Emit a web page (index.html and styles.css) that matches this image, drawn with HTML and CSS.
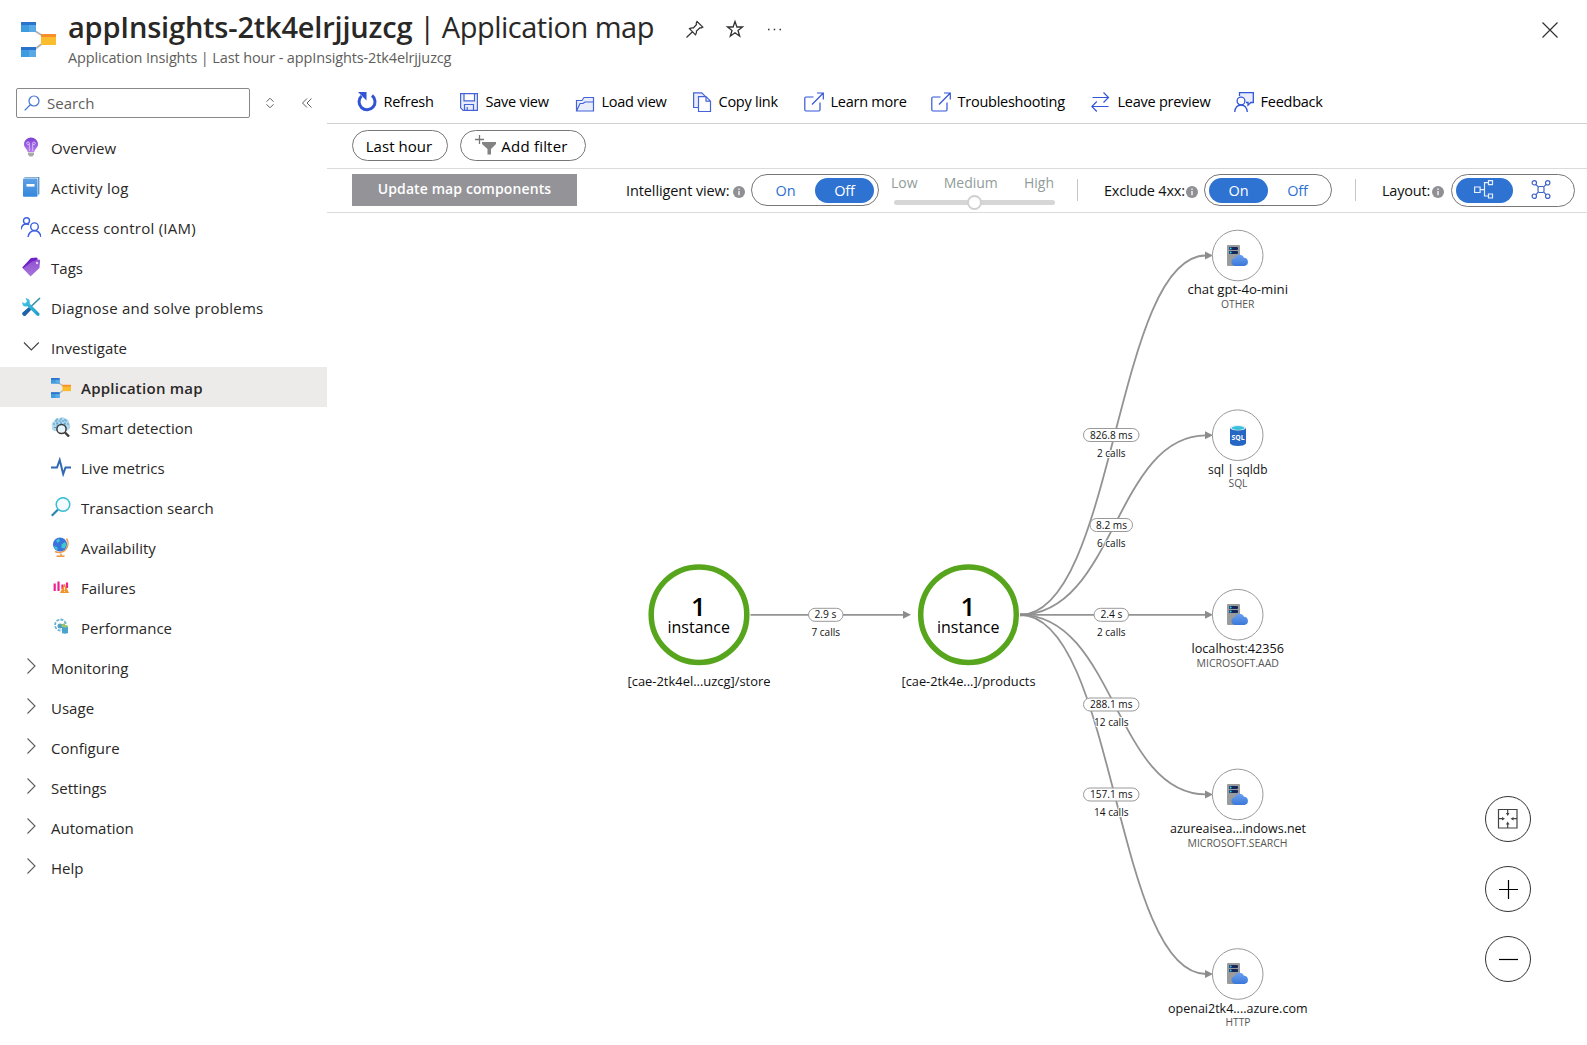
FILE: index.html
```html
<!DOCTYPE html>
<html lang="en">
<head>
<meta charset="utf-8">
<title>Application map</title>
<link rel="stylesheet" href="styles.css">
</head>
<body>
<svg class="defs" aria-hidden="true">
  <defs>
    <linearGradient id="gBulb" x1="0" y1="0" x2="0" y2="1"><stop offset="0" stop-color="#7a3fd0"/><stop offset="1" stop-color="#b77df0"/></linearGradient>
    <linearGradient id="gBook" x1="0" y1="0" x2="0" y2="1"><stop offset="0" stop-color="#5ea0e6"/><stop offset="1" stop-color="#3388dc"/></linearGradient>
    <linearGradient id="gTag" x1="0" y1="0" x2="0" y2="1"><stop offset="0" stop-color="#8f4fd0"/><stop offset="1" stop-color="#a875dc"/></linearGradient>
    <linearGradient id="gCloud" x1="0" y1="0" x2="0" y2="1"><stop offset="0" stop-color="#6ca0f0"/><stop offset="1" stop-color="#3a78d8"/></linearGradient>
    <linearGradient id="gTool" x1="0" y1="0" x2="1" y2="1"><stop offset="0" stop-color="#45c8ec"/><stop offset="1" stop-color="#1f9cc8"/></linearGradient>
    <symbol id="appmap" viewBox="0 0 35 35">
      <path d="M14 9 L22 14 M14 27 L22 21" stroke="#b3b3b3" stroke-width="2" fill="none"/>
      <path d="M0 0h15v10H0z" fill="#3d9be0"/><path d="M8 2h7v8H8z" fill="#5aa9e6"/><path d="M0 0h15v3H0z" fill="#2a72cc"/>
      <path d="M0 25h15v10H0z" fill="#3d9be0"/><path d="M8 27h7v8H8z" fill="#5aa9e6"/><path d="M0 25h15v3H0z" fill="#2a72cc"/>
      <path d="M20 12h15v11H20z" fill="#fbbd2e"/><path d="M20 12h15v3H20z" fill="#f98f2b"/>
    </symbol>
    <symbol id="info" viewBox="0 0 12 12"><circle cx="6" cy="6" r="6" fill="#8f8f94"/><path d="M6 5v4.2M6 2.6v1.3" stroke="#fff" stroke-width="1.3"/></symbol>
    <symbol id="chev" viewBox="0 0 20 20"><path d="M6.500 2.500 L14 10 L6.500 17.500" fill="none" stroke="#605e5c" stroke-width="1.1"/></symbol>
    <symbol id="ext" viewBox="0 0 20 20"><path d="M9.500 5H2Q.8 5 .8 6.200V17.800Q.8 19 2 19H14.800Q16 19 16 17.800V10.500M13 1H19.300V7.500M19.300 1 8 12.500" fill="none" stroke="#3355d8" stroke-width="1.2"/></symbol>
    <symbol id="server" viewBox="0 0 22 22">
      <path d="M1 0h11q1 0 1 1v20H1q-1 0-1-1V1q0-1 1-1z" fill="#9b9b9b"/>
      <rect x="2" y="2" width="9" height="3" rx="1" fill="#14285c"/><rect x="2" y="6" width="9" height="3" rx="1" fill="#14285c"/>
      <circle cx="3.600" cy="3.500" r="1" fill="#35d0f0"/><circle cx="3.600" cy="7.500" r="1" fill="#35d0f0"/>
      <path d="M8 21a3.900 3.900 0 0 1-.4-7.700A5 5 0 0 1 17 12.700a4.200 4.200 0 0 1 .6 8.300z" fill="url(#gCloud)"/>
    </symbol>
  </defs>
</svg>

<header class="head">
  <svg class="head-logo"><use href="#appmap"/></svg>
  <div class="head-text">
    <h1 class="title"><b class="title-name">appInsights-2tk4elrjjuzcg</b><span class="title-page"> | Application map</span></h1>
    <p class="subtitle">Application Insights | Last hour - appInsights-2tk4elrjjuzcg</p>
  </div>
  <div class="head-actions">
    <svg width="20" height="20" viewBox="0 0 20 20"><path d="M12 2.500 L17.800 8 L16 9 L15 8.700 L11.500 12 Q11.700 14 10.500 15.800 L4.500 9.600 Q6.500 8.600 8.300 9 L11.500 5.500 L11.200 4.300 Z M7.500 12.800 L1.500 18.500" fill="none" stroke="#323130" stroke-width="1.200"/></svg>
    <svg width="20" height="20" viewBox="0 0 20 20"><path d="M10 2.500 L11.900 8 H17.500 L13 11.500 L14.700 17.200 L10 13.800 L5.300 17.200 L7 11.500 L2.500 8 H8.100 Z" fill="none" stroke="#323130" stroke-width="1.300"/></svg>
    <svg width="20" height="20" viewBox="0 0 20 20"><path d="M3 10.500h1.500M8.700 10.500h1.500M14.500 10.500h1.500" stroke="#323130" stroke-width="1.300"/></svg>
  </div>
  <svg class="close" width="16" height="16" viewBox="0 0 16 16"><path d="M.5.500 15.500 15.500M15.500.500.500 15.500" stroke="#323130" stroke-width="1.200"/></svg>
</header>

<div class="body">
  <aside class="side">
    <div class="side-top">
      <div class="search">
        <svg width="16" height="16" viewBox="0 0 16 16"><circle cx="10" cy="6" r="5" fill="none" stroke="#3f73cf" stroke-width="1.200"/><path d="M6.500 9.500.700 15.300" stroke="#3f73cf" stroke-width="1.200"/></svg>
        <span>Search</span>
      </div>
      <svg class="updown" width="10" height="12" viewBox="0 0 10 12"><path d="M1.500 4.700 5 1.200l3.500 3.500M1.500 7.300 5 10.800l3.500-3.500" fill="none" stroke="#605e5c" stroke-width="1"/></svg>
      <svg class="collapse" width="12" height="12" viewBox="0 0 12 12"><path d="M6 1.500 1.500 6 6 10.500M10.500 1.500 6 6l4.500 4.500" fill="none" stroke="#605e5c" stroke-width="1"/></svg>
    </div>
    <nav class="nav">
      <a class="row"><svg viewBox="0 0 20 20"><path d="M10 .5a7 6.800 0 0 1 7 6.800c0 3.200-3.200 4.700-3.800 7.700H6.800C6.200 12 3 10.500 3 7.300A7 6.800 0 0 1 10 .5z" fill="url(#gBulb)"/><path d="M8.300 14V7.500M11.700 14V7.500M8.300 7.500H6.800a1.300 1.300 0 1 1 1.500-1.500zM11.700 7.500h1.500a1.300 1.300 0 1 0-1.500-1.500z" stroke="#e4d0fb" stroke-width=".8" fill="none"/><path d="M7 15.500h6v2l-1.500 2h-3L7 17.500z" fill="#a9a9a9"/></svg><span>Overview</span></a>
      <a class="row wide"><svg viewBox="0 0 20 20"><path d="M3.500 0h14v19h-14L2 18V1.500z" fill="#e6f1fb"/><path d="M3.500 0h14.300v17.500" fill="none" stroke="#2c6fb0" stroke-width="1"/><rect x="2" y="1.500" width="14.500" height="18.200" rx="1" fill="url(#gBook)"/><rect x="5.500" y="7" width="8" height="2.600" fill="#fff"/></svg><span>Activity log</span></a>
      <a class="row wide"><svg viewBox="0 0 20 20"><g fill="none" stroke="#3b5fe0" stroke-width="1.400"><circle cx="5.500" cy="3.700" r="3"/><path d="M0 12.500C.5 9 2.800 7 5.500 7q1.500 0 2.500.7"/><circle cx="13.500" cy="9.700" r="3.800"/><path d="M7 20c.7-4 3.500-6.300 6.500-6.300S19.300 16 20 20"/></g></svg><span>Access control (IAM)</span></a>
      <a class="row"><svg viewBox="0 0 20 20"><path d="M10 1 15.500.5 17 2 9 10.500 5 14 1.200 10.500z" fill="#7020c4"/><path d="M11 4.500 18 2.500q1 0 1 1.200L18.500 11 9.500 19.500 2 11.500z" fill="url(#gTag)"/><circle cx="16" cy="6" r="1.500" fill="#fff" stroke="#9858d6"/></svg><span>Tags</span></a>
      <a class="row wide"><svg viewBox="0 0 20 20"><path d="M19 1 10 9.500" stroke="#3a8fae" stroke-width="1.700"/><path d="M8.500 9.500 11 12 4.500 18.700Q3 19.500 1.800 18.300T1.600 15.500z" fill="#1e62a8"/><path d="M4.500.8 7.800 2.200Q9.500 4 8.800 6.800L18.500 16.500Q19 18.500 17.200 19L15.800 18.600 6.400 9.200Q3.500 10 1.800 8.200L1 5 4 6.500 6 4.500z" fill="url(#gTool)"/></svg><span>Diagnose and solve problems</span></a>
      <a class="row"><svg viewBox="0 0 20 20"><path d="M3 5.500 10.300 13l7.500-7.500" fill="none" stroke="#484644" stroke-width="1.200"/></svg><span>Investigate</span></a>
      <a class="row sub active"><svg><use href="#appmap"/></svg><span>Application map</span></a>
      <a class="row sub"><svg viewBox="0 0 20 20"><path d="M3 4Q5 0 8 1.500 12-1 14.500 1.500 18 2 18 6 20.500 9 18 12.500L14 15 5 14Q0 14 1 9.500 0 5.500 3 4z" fill="#b3d9ee"/><path d="M2 7h16M3 10.500h14M4 4h12M6 1.500v13M10 1v14M14 2v12" stroke="#4e97c4" stroke-width="1" stroke-dasharray="2 1.500"/><circle cx="10.500" cy="12" r="4.600" fill="#e8f4fb" stroke="#3c3c3c" stroke-width="1.500"/><path d="M14 15.500l4 4" stroke="#3c3c3c" stroke-width="2.400"/></svg><span>Smart detection</span></a>
      <a class="row sub"><svg viewBox="0 0 20 20"><path d="M0 10.500h6L8.700 3l3.500 14 2.300-6.500H20" fill="none" stroke="#2f68b4" stroke-width="2"/></svg><span>Live metrics</span></a>
      <a class="row sub"><svg viewBox="0 0 20 20"><path d="M7 12.500.800 18.800" stroke="#2a86ae" stroke-width="2.200"/><circle cx="12" cy="7.500" r="6.800" fill="#f3fbfe" stroke="#38bcd8" stroke-width="1.500"/></svg><span>Transaction search</span></a>
      <a class="row sub"><svg viewBox="0 0 20 20"><path d="M15.500 1.500A9 9 0 0 1 4 14.500M10 16.500v2.500" fill="none" stroke="#f09a4a" stroke-width="1.500"/><circle cx="9" cy="7.500" r="7" fill="#3874dc"/><path d="M5 3.500 8 1.500 9 4 6.500 6zM10.500 7.500 14 5l1.500 3-2 3.500-3-.5zM3 9l3 1 1 3-2.500-.5z" fill="#3cc8ce"/><path d="M5.500 19.200h8" stroke="#f09a4a" stroke-width="1.600"/></svg><span>Availability</span></a>
      <a class="row sub"><svg viewBox="0 0 20 20"><path d="M3.700 6.500V14M7.500 4.500V14M11.500 7.500V12M16 5.500V11" stroke="#ec2090" stroke-width="2.200"/><path d="M13.500 6.500 18 16H9z" fill="#f8902c"/><path d="M13.500 10v3M13.500 14v1" stroke="#fff1d0" stroke-width="1"/></svg><span>Failures</span></a>
      <a class="row sub"><svg viewBox="0 0 20 20"><circle cx="9.500" cy="8" r="5.500" fill="none" stroke="#6ab4d4" stroke-width="1.800" stroke-dasharray="3 1.200"/><circle cx="9" cy="9" r="2.500" fill="#4f9fc6"/><path d="M9 8l5-2v4z" fill="#8cc06a"/><path d="M11 9.500h6v6.500q-3 1.500-6 0z" fill="#4aa3cc"/><ellipse cx="14" cy="9.300" rx="3" ry="1.100" fill="#a8c860"/></svg><span>Performance</span></a>
      <a class="row"><svg class="cv"><use href="#chev"/></svg><span>Monitoring</span></a>
      <a class="row"><svg class="cv"><use href="#chev"/></svg><span>Usage</span></a>
      <a class="row"><svg class="cv"><use href="#chev"/></svg><span>Configure</span></a>
      <a class="row"><svg class="cv"><use href="#chev"/></svg><span>Settings</span></a>
      <a class="row"><svg class="cv"><use href="#chev"/></svg><span>Automation</span></a>
      <a class="row"><svg class="cv"><use href="#chev"/></svg><span>Help</span></a>
    </nav>
  </aside>

  <main class="main">
    <div class="toolbar">
      <div class="cmd"><svg viewBox="0 0 20 20"><path d="M15 3.500A8 8 0 1 1 4.500 4" fill="none" stroke="#2f55d4" stroke-width="3"/><path d="M1 0h8.500v8.500z" fill="#2f55d4"/></svg><span>Refresh</span></div>
      <div class="cmd"><svg viewBox="0 0 20 20"><path d="M1.600 1.600h16.800v16.800H4.200l-2.600-2.600zM5 1.600v7.200h10.500V1.600M5.500 18V12.500h9V18M8.200 15v3" fill="#e9edfb" stroke="#4463d8" stroke-width="1.200"/></svg><span>Save view</span></div>
      <div class="cmd"><svg viewBox="0 0 20 20"><path d="M1.500 19V8.500h5.500l2-3h9.500V19zM1.500 19l3.500-7.500h3L10 10h8.500" fill="#e9edfb" stroke="#4463d8" stroke-width="1.200"/></svg><span>Load view</span></div>
      <div class="cmd"><svg viewBox="0 0 20 20"><path d="M6 15.500H1.600V.8h8.200l3.500 3.500" fill="#e9edfb" stroke="#4463d8" stroke-width="1.200"/><path d="M6.500 4.700h7.500l4.500 4.500v10.300h-12zM14 4.700v4.500h4.500" fill="#fff" stroke="#4463d8" stroke-width="1.200"/></svg><span>Copy link</span></div>
      <div class="cmd"><svg><use href="#ext"/></svg><span>Learn more</span></div>
      <div class="cmd"><svg><use href="#ext"/></svg><span>Troubleshooting</span></div>
      <div class="cmd"><svg viewBox="0 0 20 20"><path d="M1.500 5.500h16M12.500.5l5 5-5 5M17.500 14.500H.8M5.800 9.500l-5 5 5 5" fill="none" stroke="#3355d8" stroke-width="1.200"/></svg><span>Leave preview</span></div>
      <div class="cmd"><svg viewBox="0 0 20 20"><path d="M5.500 4V.700h13.800v9.800h-2.500L14 13.200v-2.700h-2" fill="#e9edfb" stroke="#3355d8" stroke-width="1.300"/><circle cx="7" cy="9" r="3.900" fill="#fff" stroke="#3355d8" stroke-width="1.300"/><path d="M.7 20c.5-4.500 3-7 6.300-7s5.800 2.500 6.300 7" fill="none" stroke="#3355d8" stroke-width="1.300"/></svg><span>Feedback</span></div>
    </div>
    <div class="filters">
      <div class="pill hour"><span>Last hour</span></div>
      <div class="pill add"><svg width="22" height="20" viewBox="0 0 22 20"><path d="M4.500 0v9M0 4.500h9" stroke="#777" stroke-width="1.300"/><path d="M7 7h14v2l-5 5v5.500h-3.500V14L7 9z" fill="#828282"/></svg><span>Add filter</span></div>
    </div>
    <div class="options">
      <div class="update"><span>Update map components</span></div>
      <div class="field f-view"><span>Intelligent view:</span><svg><use href="#info"/></svg></div>
      <div class="toggle t-view"><span class="opt">On</span><span class="opt sel">Off</span></div>
      <div class="slider"><div class="levels"><span>Low</span><span>Medium</span><span>High</span></div><div class="track"><div class="thumb"></div></div></div>
      <div class="sep s1"></div>
      <div class="field f-exc"><span>Exclude 4xx:</span><svg><use href="#info"/></svg></div>
      <div class="toggle"><span class="opt sel">On</span><span class="opt">Off</span></div>
      <div class="sep s2"></div>
      <div class="field f-lay"><span>Layout:</span><svg><use href="#info"/></svg></div>
      <div class="toggle t-lay"><span class="opt sel"><svg width="20" height="20" viewBox="0 0 20 20"><g fill="none" stroke="#e8effc" stroke-width="1.200"><path d="M.6 7h5.500v5.500H.6zM14.500.6h4v4h-4zM14.500 14h4v4h-4zM6.100 9.700h4M14.500 2.600h-4v13.400h4"/></g></svg></span><span class="opt"><svg width="20" height="20" viewBox="0 0 20 20"><g fill="none" stroke="#3f62c8" stroke-width="1.200"><rect x="7" y="6.500" width="6" height="6" rx="1.500"/><circle cx="3.300" cy="2.800" r="2.200"/><circle cx="16.700" cy="2.800" r="2.200"/><circle cx="3.300" cy="16.200" r="2.200"/><circle cx="16.700" cy="16.200" r="2.200"/><path d="M4.800 4.400l2.500 2.500M15.200 4.400l-2.500 2.500M4.800 14.600l2.500-2.500M15.200 14.600l-2.500-2.500"/></g></svg></span></div>
    </div>

    <div class="map">
      <svg class="graph" viewBox="327 213 1260 832">
        <g class="edges">
          <path d="M750.500 614.800H904"/>
          <path d="M1020 614.800H1206"/>
          <path d="M1020 614.800C1115 614.800 1115 255.500 1206 255.500"/>
          <path d="M1020 614.800C1115 614.800 1115 435.300 1206 435.300"/>
          <path d="M1020 614.800C1115 614.800 1115 794.400 1206 794.400"/>
          <path d="M1020 614.800C1115 614.800 1115 974 1206 974"/>
        </g>
        <g class="arrows">
          <path d="M903 610.800l8 4-8 4zM1205 610.800l8 4-8 4zM1205 251.500l8 4-8 4zM1205 431.300l8 4-8 4zM1205 790.400l8 4-8 4zM1205 970l8 4-8 4z"/>
          <path d="M1020 613l14 1.800-14 1.800z"/>
        </g>
        <g class="big"><circle cx="699" cy="614.700" r="47.800"/><circle cx="968.500" cy="614.700" r="47.800"/></g>
        <g class="count"><text x="698.500" y="616">1</text><text x="968" y="616">1</text></g>
        <g class="inst"><text x="667.500" y="633" textLength="62.500" lengthAdjust="spacingAndGlyphs">instance</text><text x="937" y="633" textLength="62.500" lengthAdjust="spacingAndGlyphs">instance</text></g>
        <g class="name">
          <text x="627.500" y="686" textLength="143" lengthAdjust="spacingAndGlyphs">[cae-2tk4el...uzcg]/store</text>
          <text x="901.500" y="686" textLength="134" lengthAdjust="spacingAndGlyphs">[cae-2tk4e...]/products</text>
          <text x="1187.500" y="294" textLength="100.500" lengthAdjust="spacingAndGlyphs">chat gpt-4o-mini</text>
          <text x="1208" y="474" textLength="59.500" lengthAdjust="spacingAndGlyphs">sql | sqldb</text>
          <text x="1191.500" y="653" textLength="92.500" lengthAdjust="spacingAndGlyphs">localhost:42356</text>
          <text x="1170" y="833" textLength="136" lengthAdjust="spacingAndGlyphs">azureaisea...indows.net</text>
          <text x="1168" y="1013" textLength="139.500" lengthAdjust="spacingAndGlyphs">openai2tk4....azure.com</text>
        </g>
        <g class="kind">
          <text x="1221" y="308" textLength="33.500" lengthAdjust="spacingAndGlyphs">OTHER</text>
          <text x="1228.500" y="487" textLength="19" lengthAdjust="spacingAndGlyphs">SQL</text>
          <text x="1196.500" y="667" textLength="82.500" lengthAdjust="spacingAndGlyphs">MICROSOFT.AAD</text>
          <text x="1187.500" y="847" textLength="100" lengthAdjust="spacingAndGlyphs">MICROSOFT.SEARCH</text>
          <text x="1225.500" y="1026" textLength="25" lengthAdjust="spacingAndGlyphs">HTTP</text>
        </g>
        <g class="small"><circle cx="1237.700" cy="255.500" r="25.300"/><circle cx="1237.700" cy="435.200" r="25.300"/><circle cx="1237.700" cy="614.700" r="25.300"/><circle cx="1237.700" cy="794.400" r="25.300"/><circle cx="1237.700" cy="974" r="25.300"/></g>
        <use href="#server" x="1227" y="245" width="22" height="22"/>
        <use href="#server" x="1227" y="604" width="22" height="22"/>
        <use href="#server" x="1227" y="784" width="22" height="22"/>
        <use href="#server" x="1227" y="963" width="22" height="22"/>
        <path d="M1230 427.500v16q2 2.500 8 2.500t8-2.500v-16z" fill="#2767c4"/>
        <ellipse cx="1238" cy="427.800" rx="8" ry="2.800" fill="#e4eef4"/><ellipse cx="1238" cy="428" rx="6.200" ry="1.900" fill="#36c0dc"/>
        <text class="sql" x="1231.500" y="439.500" textLength="13" lengthAdjust="spacingAndGlyphs">SQL</text>
        <g class="badge">
          <rect x="808.500" y="608.300" width="34.500" height="13" rx="6.500"/>
          <rect x="1083.500" y="428.500" width="55.500" height="13" rx="6.500"/>
          <rect x="1090" y="518.500" width="42.500" height="13" rx="6.500"/>
          <rect x="1094" y="608.300" width="34.500" height="13" rx="6.500"/>
          <rect x="1083.500" y="698" width="55.500" height="13" rx="6.500"/>
          <rect x="1083.500" y="788" width="55.500" height="13" rx="6.500"/>
        </g>
        <g class="val">
          <text x="814.500" y="618" textLength="22" lengthAdjust="spacingAndGlyphs">2.9 s</text>
          <text x="1090" y="439" textLength="42.500" lengthAdjust="spacingAndGlyphs">826.8 ms</text>
          <text x="1096" y="529" textLength="31" lengthAdjust="spacingAndGlyphs">8.2 ms</text>
          <text x="1100.500" y="618" textLength="22" lengthAdjust="spacingAndGlyphs">2.4 s</text>
          <text x="1090" y="708" textLength="42.500" lengthAdjust="spacingAndGlyphs">288.1 ms</text>
          <text x="1090" y="798" textLength="42.500" lengthAdjust="spacingAndGlyphs">157.1 ms</text>
        </g>
        <g class="val halo">
          <text x="811.500" y="636" textLength="28.500" lengthAdjust="spacingAndGlyphs">7 calls</text>
          <text x="1097" y="457" textLength="28.500" lengthAdjust="spacingAndGlyphs">2 calls</text>
          <text x="1097" y="547" textLength="28.500" lengthAdjust="spacingAndGlyphs">6 calls</text>
          <text x="1097" y="636" textLength="28.500" lengthAdjust="spacingAndGlyphs">2 calls</text>
          <text x="1094" y="726" textLength="34.500" lengthAdjust="spacingAndGlyphs">12 calls</text>
          <text x="1094" y="816" textLength="34.500" lengthAdjust="spacingAndGlyphs">14 calls</text>
        </g>
      </svg>
      <div class="zoom">
        <div class="zb"><svg width="22" height="22" viewBox="0 0 22 22"><path d="M1.500 1.500h18.500v18.500H1.500zM1.500 10.700h4.500M20 10.700h-4.500M10.700 1.500v4.500M10.700 20v-4.500" fill="none" stroke="#444" stroke-width="1.200"/><path d="M5 8.900l3 1.800-3 1.800zM16.500 8.900l-3 1.800 3 1.800zM8.900 5h3.600l-1.800 3zM8.900 16.500h3.600l-1.800-3z" fill="#444"/></svg></div>
        <div class="zb"><svg width="22" height="22" viewBox="0 0 22 22"><path d="M2 11.500h19M11.500 2v19" stroke="#000" stroke-width="1.200"/></svg></div>
        <div class="zb"><svg width="22" height="22" viewBox="0 0 22 22"><path d="M2 11.500h19" stroke="#000" stroke-width="1.200"/></svg></div>
      </div>
    </div>
  </main>
</div>
</body>
</html>
```
FILE: styles.css
```css
* { box-sizing: border-box; }
html, body { margin: 0; height: 1045px; overflow: hidden; background: #fff; }
body {
  display: flex; flex-direction: column;
  font-family: "Open Sans", "Noto Sans", sans-serif; font-size: 15px; color: #292827;
}
svg { flex: none; display: block; }
span, b { white-space: nowrap; }
.defs { position: absolute; width: 0; height: 0; }

.head { display: flex; height: 80px; flex: none; padding-left: 21px; }
.head-logo { width: 35px; height: 35px; margin-top: 22px; }
.head-text { margin-left: 12px; width: 618px; }
.title { margin: 7px 0 0; font-size: 29px; line-height: 40px; font-weight: 400; white-space: pre; }
.title-name { font-weight: 600; letter-spacing: -0.2px; }
.title-page { letter-spacing: -0.5px; white-space: pre; }
.subtitle { margin: 0; font-size: 14.5px; line-height: 21px; color: #605e5c; letter-spacing: -0.13px; white-space: nowrap; }
.head-actions { display: flex; gap: 20px; margin: 19px 0 0 -1px; }
.close { margin: 22px 29px 0 auto; }

.body { display: flex; flex: 1; min-height: 0; }
.side { width: 327px; flex: none; }
.side-top { display: flex; align-items: center; height: 47px; padding: 0 0 1px 16px; }
.search { display: flex; align-items: center; gap: 7px; width: 234px; height: 30px; padding-left: 7px; border: 1px solid #8a8886; border-radius: 2px; color: #605e5c; }
.updown { margin-left: 15px; }
.collapse { margin-left: 26px; }
.row { display: flex; align-items: center; height: 40px; padding: 0 0 0 21px; gap: 10px; letter-spacing: 0.02px; }
.wide { letter-spacing: 0.24px; }
.row svg { width: 20px; height: 20px; }
.row span { padding-top: 2px; }
.row .cv { margin-top: -3px; }
.sub { padding-left: 51px; }
.active { background: #edebe9; font-weight: 600; letter-spacing: 0.25px; }
.active svg { margin-top: 2px; }

.main { flex: 1; display: flex; flex-direction: column; min-width: 0; }
.toolbar { display: grid; grid-template-columns: 102px 116px 117px 112px 127px 160px 143px 1fr; height: 44px; padding-left: 30px; border-bottom: 1px solid #d2d0ce; color: #000; font-size: 14.5px; letter-spacing: -0.25px; }
.cmd { display: flex; align-items: center; gap: 6.5px; height: 43px; }
.cmd svg { width: 20px; height: 20px; }
.filters { display: flex; gap: 12px; height: 45px; padding: 6px 0 0 25px; border-bottom: 1px solid #dddbda; color: #000; }
.pill { display: flex; align-items: center; justify-content: center; height: 31px; border: 1px solid #797775; border-radius: 16px; }
.hour { width: 96px; padding-right: 2px; letter-spacing: 0.05px; }
.add { width: 126px; gap: 4px; padding-right: 3px; letter-spacing: 0.2px; }
.add svg { margin-top: -2px; }
.options { display: flex; height: 44px; padding: 5px 0 0 25px; border-bottom: 1px solid #dddbda; color: #111; font-size: 14px; }
.update { width: 225px; height: 32px; background: #949398; color: #fff; font-weight: 600; display: flex; align-items: center; justify-content: center; padding-bottom: 3px; letter-spacing: 0.1px; }
.field { display: flex; align-items: center; justify-content: space-between; height: 32px; font-size: 14.5px; letter-spacing: -0.1px; }
.field svg { width: 12px; height: 12px; margin-top: 4px; }
.f-view { margin-left: 49px; width: 119px; }
.f-exc { margin-left: 26px; width: 94px; letter-spacing: -0.2px; }
.f-lay { margin-left: 26px; width: 62px; letter-spacing: -0.2px; }
.toggle { display: flex; width: 128px; height: 32px; margin-left: 6px; padding: 3px 4px; border: 1px solid #797775; border-radius: 17px; color: #2e72d2; font-size: 14.5px; letter-spacing: -0.1px; }
.opt { flex: 1; display: flex; align-items: center; justify-content: center; height: 25px; border-radius: 13px; }
.sel { background: #2e72d2; color: #fff; }
.t-lay { width: 124px; height: 33px; margin-left: 7px; }
.t-lay svg { margin: -1px 1px 0 0; }
.slider { width: 161px; margin-left: 15px; color: #8f9c99; }
.levels { display: flex; justify-content: space-between; height: 26px; padding: 0 1px 0 0; line-height: 18px; margin-left: -3px; }
.track { display: flex; justify-content: center; align-items: center; height: 5px; background: #d6d6d6; border-radius: 3px; }
.thumb { width: 15px; height: 15px; flex: none; border: 2px solid #d0d0d0; border-radius: 50%; background: #fff; }
.sep { width: 1px; height: 22px; margin: 5px 0 0 22px; background: #c8c6c4; }
.s2 { margin-left: 23px; }

.map { position: relative; flex: 1; }
.graph { width: 1260px; height: 832px; }
.edges path { fill: none; stroke: #939393; stroke-width: 1.8; }
.arrows path { fill: #8c8c8c; }
.big circle { fill: #fff; stroke: #56a51c; stroke-width: 5.5; }
.small circle { fill: #fff; stroke: #999; stroke-width: 1; }
.count text { font-size: 26px; font-weight: 600; text-anchor: middle; fill: #000; }
.inst text { font-size: 17px; fill: #000; }
.name text { font-size: 13px; fill: #111; }
.kind text { font-size: 11px; fill: #555; }
.sql { font-size: 7px; font-weight: 700; fill: #fff; }
.badge rect { fill: #fff; stroke: #999; stroke-width: 1; }
.val text { font-size: 10.5px; fill: #111; }
.halo text { stroke: #fff; stroke-width: 2px; paint-order: stroke; }
.zoom { position: absolute; left: 1158px; top: 583px; display: flex; flex-direction: column; gap: 24px; }
.zb { display: flex; align-items: center; justify-content: center; width: 46px; height: 46px; border: 1px solid #333; border-radius: 50%; }
```
